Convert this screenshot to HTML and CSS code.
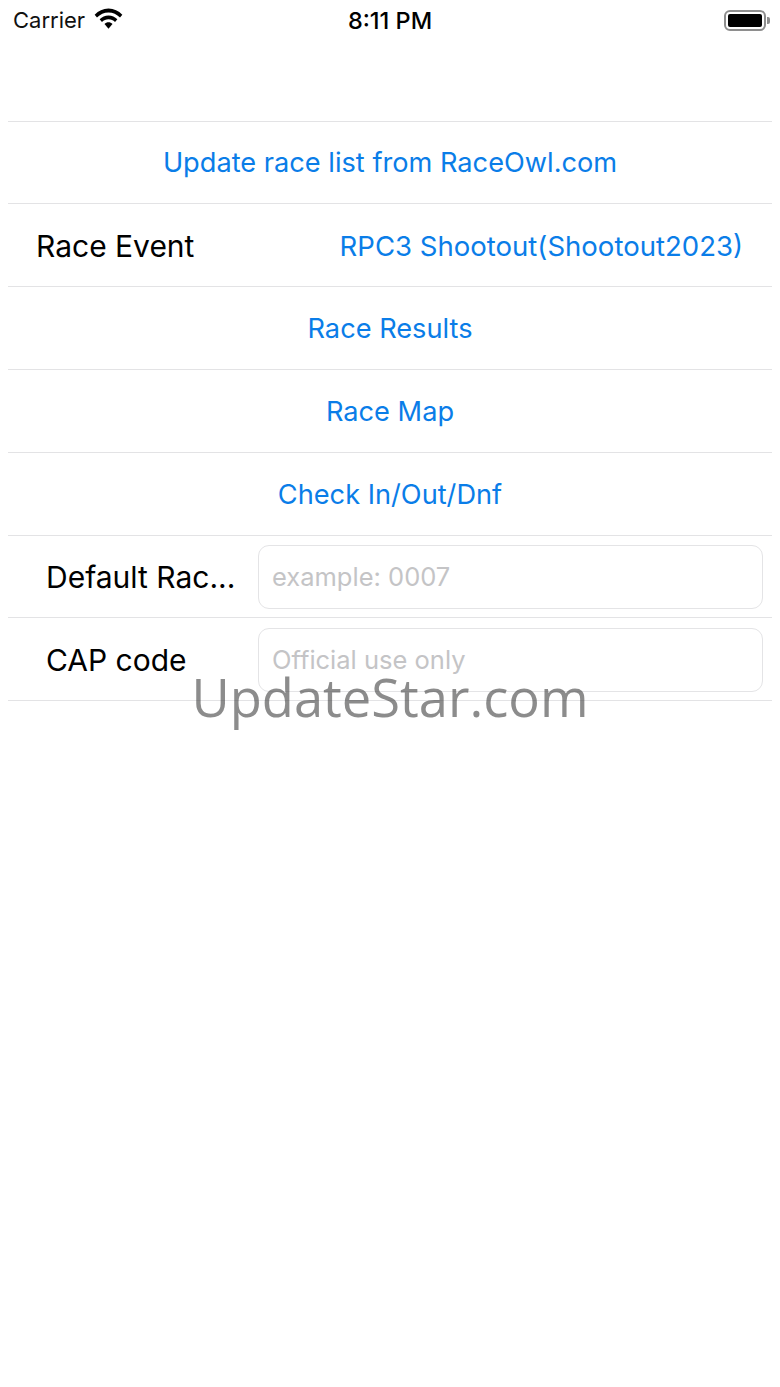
FILE: index.html
```html
<!DOCTYPE html>
<html lang="en">
<head>
<meta charset="utf-8">
<title>Race settings</title>
<link rel="stylesheet" href="styles.css">
</head>
<body>
<div class="screen">
  <header class="status">
    <div class="status-left">
      <span class="carrier">Carrier</span>
      <svg class="wifi" width="31" height="25" viewBox="0 0 28 21" preserveAspectRatio="none"><path d="M14 3C9 3 5 5 1.500 8.200L3.600 10.500C6.500 7.800 10 6.200 14 6.200S21.500 7.800 24.400 10.500L26.500 8.200C23 5 19 3 14 3Z"/><path d="M14 8.800C10.800 8.800 8.200 10 6 12L8.100 14.300C9.700 12.900 11.700 12 14 12S18.300 12.900 19.900 14.300L22 12C19.800 10 17.200 8.800 14 8.800Z"/><path d="M14 14.500C12.600 14.500 11.400 15 10.400 15.900L14 20L17.600 15.900C16.600 15 15.400 14.500 14 14.500Z"/></svg>
    </div>
    <div class="time">8:11 PM</div>
    <div class="status-right">
      <span class="battery"><span class="battery-fill"></span></span><span class="battery-cap"></span>
    </div>
  </header>
  <main class="table">
    <div class="row"><a class="link">Update race list from RaceOwl.com</a></div>
    <div class="row row-split"><span class="label">Race Event</span><a class="link link-wide">RPC3 Shootout(Shootout2023)</a></div>
    <div class="row"><a class="link">Race Results</a></div>
    <div class="row"><a class="link">Race Map</a></div>
    <div class="row"><a class="link">Check In/Out/Dnf</a></div>
    <div class="row row-field"><span class="label field-label">Default Rac...</span><input class="field" placeholder="example: 0007"></div>
    <div class="row row-field"><span class="label field-label">CAP code</span><input class="field" placeholder="Official use only"></div>
  </main>
  <div class="watermark">UpdateStar.com</div>
</div>
</body>
</html>
```
FILE: styles.css
```css
* { box-sizing: border-box; }
html, body { margin: 0; background: #fff; }
.screen {
  position: relative;
  width: 780px;
  height: 1387px;
  overflow: hidden;
  font-family: Inter, "Liberation Sans", sans-serif;
  color: #000;
}
.status {
  height: 40px;
  display: grid;
  grid-template-columns: 1fr auto 1fr;
  align-items: center;
  padding: 0 10px 0 13px;
}
.status-left { display: flex; align-items: center; gap: 8px; }
.carrier { font-size: 22px; color: #111; }
.wifi { display: block; margin-top: -5px; }
.time { font-size: 23.5px; font-weight: 500; margin-left: -3px; }
.status-right { display: flex; justify-content: flex-end; align-items: center; }
.battery {
  width: 42px;
  height: 21px;
  border: 2px solid #8e8e8e;
  border-radius: 6px;
  padding: 2px;
  display: flex;
}
.battery-fill { flex: 1; background: #000; border-radius: 2px; }
.battery-cap { width: 3px; height: 7px; margin-left: 1px; background: #8e8e8e; border-radius: 0 2px 2px 0; }
.table {
  margin: 80.6px 8px 0;
  border-top: 1px solid #e3e3e5;
}
.row {
  height: 82.8px;
  padding-top: 1px;
  border-bottom: 1px solid #e3e3e5;
  display: flex;
  align-items: center;
  justify-content: center;
  font-size: 27.2px;
}
.row-split { justify-content: space-between; padding: 1px 29px 0 28px; }
.row-field { justify-content: flex-start; padding: 1px 9px 0 38px; }
.link { color: #0a7de8; }
.link-wide { font-size: 27.55px; }
.label { color: #000; font-size: 30px; }
.field-label { width: 212px; flex: none; }
.field {
  flex: 1;
  min-width: 0;
  height: 64px;
  border: 1px solid #e4e4e6;
  border-radius: 11px;
  padding: 0 13px;
  font: inherit;
  font-size: 25.5px;
  background: #fff;
  outline: none;
}
.field::placeholder { color: #c4c4c6; opacity: 1; }
.watermark {
  position: absolute;
  left: 0;
  right: 0;
  top: 659px;
  text-align: center;
  font-family: "Open Sans", sans-serif;
  font-size: 52.5px;
  line-height: 76px;
  color: rgba(70, 70, 70, 0.62);
}
```
